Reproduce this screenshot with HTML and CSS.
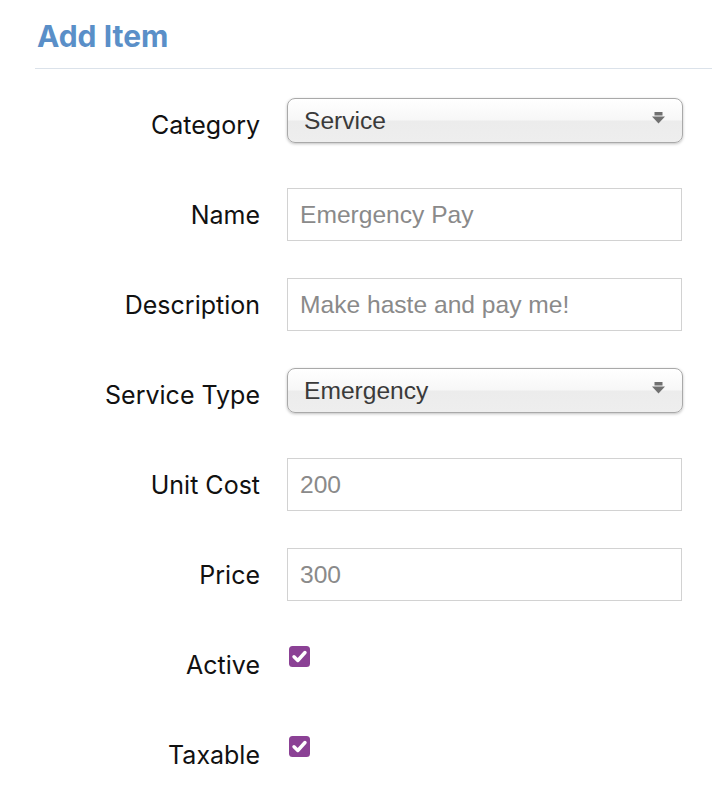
FILE: index.html
```html
<!DOCTYPE html>
<html>
<head>
	<title>Add Item</title>
	<link rel="stylesheet" href="styles.css">
</head>
<body>
	<div class="page-head">
		<h1 class="page-title">Add Item</h1>
	</div>
	<form class="item-form">
		<div class="row">
			<label class="row-label">Category</label>
			<div class="select-wrap">
				<select class="field-select">
					<option>Service</option>
				</select>
				<svg class="select-arrow" width="13" height="12" viewBox="0 0 13 12"><rect x="2.5" y="0" width="8" height="3.5" fill="#707070"/><path d="M0 4.5 H13 L6.5 11.5 Z" fill="#707070"/></svg>
			</div>
		</div>
		<div class="row">
			<label class="row-label">Name</label>
			<input class="field-input" type="text" placeholder="Emergency Pay">
		</div>
		<div class="row">
			<label class="row-label">Description</label>
			<input class="field-input" type="text" placeholder="Make haste and pay me!">
		</div>
		<div class="row">
			<label class="row-label">Service Type</label>
			<div class="select-wrap">
				<select class="field-select">
					<option>Emergency</option>
				</select>
				<svg class="select-arrow" width="13" height="12" viewBox="0 0 13 12"><rect x="2.5" y="0" width="8" height="3.5" fill="#707070"/><path d="M0 4.5 H13 L6.5 11.5 Z" fill="#707070"/></svg>
			</div>
		</div>
		<div class="row">
			<label class="row-label">Unit Cost</label>
			<input class="field-input" type="text" placeholder="200">
		</div>
		<div class="row">
			<label class="row-label">Price</label>
			<input class="field-input" type="text" placeholder="300">
		</div>
		<div class="row">
			<label class="row-label">Active</label>
			<label class="check">
				<input type="checkbox" checked>
				<svg width="21" height="21" viewBox="0 0 21 21"><rect width="21" height="21" rx="3.5" fill="#8b4195"/><path d="M5 10.8 L8.8 14.5 L16 6.5" fill="none" stroke="#fff" stroke-width="3.4" stroke-linecap="round" stroke-linejoin="round"/></svg>
			</label>
		</div>
		<div class="row">
			<label class="row-label">Taxable</label>
			<label class="check">
				<input type="checkbox" checked>
				<svg width="21" height="21" viewBox="0 0 21 21"><rect width="21" height="21" rx="3.5" fill="#8b4195"/><path d="M5 10.8 L8.8 14.5 L16 6.5" fill="none" stroke="#fff" stroke-width="3.4" stroke-linecap="round" stroke-linejoin="round"/></svg>
			</label>
		</div>
	</form>
</body>
</html>
```

FILE: styles.css
```css
body{
	margin: 0;
	font-family: Inter, "Liberation Sans", sans-serif;
	background: #fff;
	color: #111;
}
.page-head{
	margin-left: 35px;
	height: 69px;
	border-bottom: 1px solid #dbe2ea;
	box-sizing: border-box;
}
.page-title{
	margin: 0;
	padding: 16px 0 0 2px;
	font-size: 30px;
	font-weight: 700;
	line-height: 40px;
	color: #5a8fc8;
}
.item-form{
	padding-top: 29px;
}
.row{
	display: grid;
	grid-template-columns: 260px 395px;
	column-gap: 27px;
	align-items: start;
	height: 90px;
}
.row-label{
	text-align: right;
	font-size: 25px;
	line-height: 54px;
	color: #111;
}
.field-input{
	box-sizing: border-box;
	width: 395px;
	height: 53px;
	margin: 0;
	padding: 0 12px;
	border: 1px solid #d2d2d2;
	border-radius: 0;
	font-family: "Liberation Sans", Arial, sans-serif;
	font-size: 24.6px;
	color: #333;
	outline: none;
}
.field-input::placeholder{
	color: #8a8a8a;
}
.select-wrap{
	position: relative;
	width: 396px;
}
.field-select{
	-webkit-appearance: none;
	appearance: none;
	box-sizing: border-box;
	width: 396px;
	height: 45px;
	margin: 0;
	padding: 0 40px 0 16px;
	border: 1px solid #a9a9a9;
	border-radius: 8px;
	background: linear-gradient(#ffffff 0%, #f7f7f7 48%, #ececec 52%, #eeeeee 100%);
	box-shadow: 0 1px 3px rgba(0,0,0,0.25);
	font-family: "Liberation Sans", Arial, sans-serif;
	font-size: 24.6px;
	color: #3a3a3a;
	outline: none;
}
.select-arrow{
	position: absolute;
	right: 18px;
	top: 14px;
}
.check{
	display: block;
	width: 21px;
	height: 21px;
	margin: 8px 0 0 2px;
}
.check input{
	display: none;
}
.check svg{
	display: block;
}
```
